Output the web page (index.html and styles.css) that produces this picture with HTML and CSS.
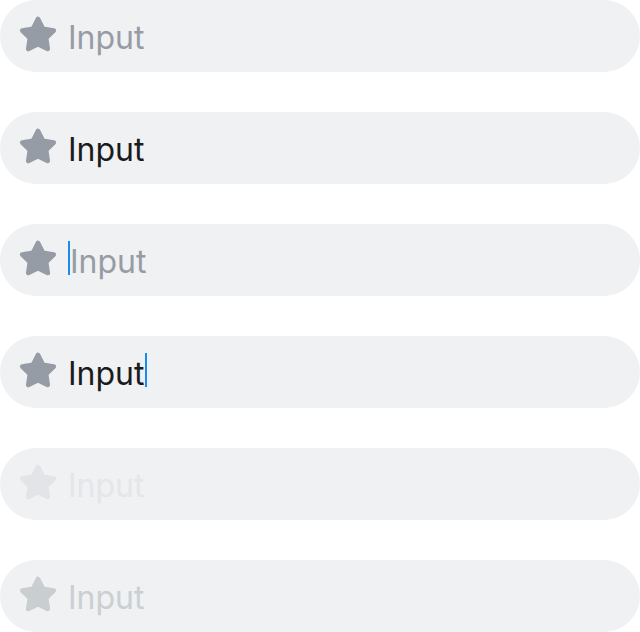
FILE: index.html
```html
<!DOCTYPE html>
<html>
<head>
<meta charset="utf-8">
<link rel="stylesheet" href="styles.css">
</head>
<body>
<div class="list">
  <div class="field">
    <svg class="star" viewBox="0 0 24 24"><polygon points="12,3.85 14.7,9.14 20.56,10.08 16.37,14.28 17.29,20.14 12,17.46 6.71,20.14 7.63,14.28 3.44,10.08 9.3,9.14"/></svg>
    <span class="text placeholder">Input</span>
  </div>
  <div class="field">
    <svg class="star" viewBox="0 0 24 24"><polygon points="12,3.85 14.7,9.14 20.56,10.08 16.37,14.28 17.29,20.14 12,17.46 6.71,20.14 7.63,14.28 3.44,10.08 9.3,9.14"/></svg>
    <span class="text value">Input</span>
  </div>
  <div class="field">
    <svg class="star" viewBox="0 0 24 24"><polygon points="12,3.85 14.7,9.14 20.56,10.08 16.37,14.28 17.29,20.14 12,17.46 6.71,20.14 7.63,14.28 3.44,10.08 9.3,9.14"/></svg>
    <span class="caret"></span><span class="text placeholder">Input</span>
  </div>
  <div class="field">
    <svg class="star" viewBox="0 0 24 24"><polygon points="12,3.85 14.7,9.14 20.56,10.08 16.37,14.28 17.29,20.14 12,17.46 6.71,20.14 7.63,14.28 3.44,10.08 9.3,9.14"/></svg>
    <span class="text value">Input</span><span class="caret"></span>
  </div>
  <div class="field disabled">
    <svg class="star" viewBox="0 0 24 24"><polygon points="12,3.85 14.7,9.14 20.56,10.08 16.37,14.28 17.29,20.14 12,17.46 6.71,20.14 7.63,14.28 3.44,10.08 9.3,9.14"/></svg>
    <span class="text">Input</span>
  </div>
  <div class="field readonly">
    <svg class="star" viewBox="0 0 24 24"><polygon points="12,3.85 14.7,9.14 20.56,10.08 16.37,14.28 17.29,20.14 12,17.46 6.71,20.14 7.63,14.28 3.44,10.08 9.3,9.14"/></svg>
    <span class="text">Input</span>
  </div>
</div>
</body>
</html>
```
FILE: styles.css
```css
html, body {
  margin: 0;
  padding: 0;
  background: #ffffff;
}
.list {
  display: flex;
  flex-direction: column;
  gap: 40px;
  width: 640px;
}
.field {
  height: 72px;
  box-sizing: border-box;
  border-radius: 36px;
  background: #f0f1f3;
  display: flex;
  align-items: center;
  padding-left: 16px;
  font-family: "Inter", "Liberation Sans", sans-serif;
}
.star {
  width: 44px;
  height: 44px;
  fill: #959ca5;
  stroke: #959ca5;
  stroke-width: 2.6;
  stroke-linejoin: round;
  margin-right: 8px;
  margin-bottom: 4px;
  flex: none;
}
.text {
  font-size: 32px;
  line-height: 36px;
  padding-top: 3px;
}
.placeholder { color: #979ca4; }
.value { color: #1a1b1e; }
.caret {
  width: 2px;
  height: 34px;
  margin-bottom: 4px;
  background: #1a8cf0;
  flex: none;
}
.text + .caret { margin-left: 1px; }
.disabled .star { fill: #e2e4e7; stroke: #e2e4e7; }
.disabled .text { color: #e4e6e9; }
.readonly .star { fill: #c9ced1; stroke: #c9ced1; }
.readonly .text { color: #cbcfd2; }
```
